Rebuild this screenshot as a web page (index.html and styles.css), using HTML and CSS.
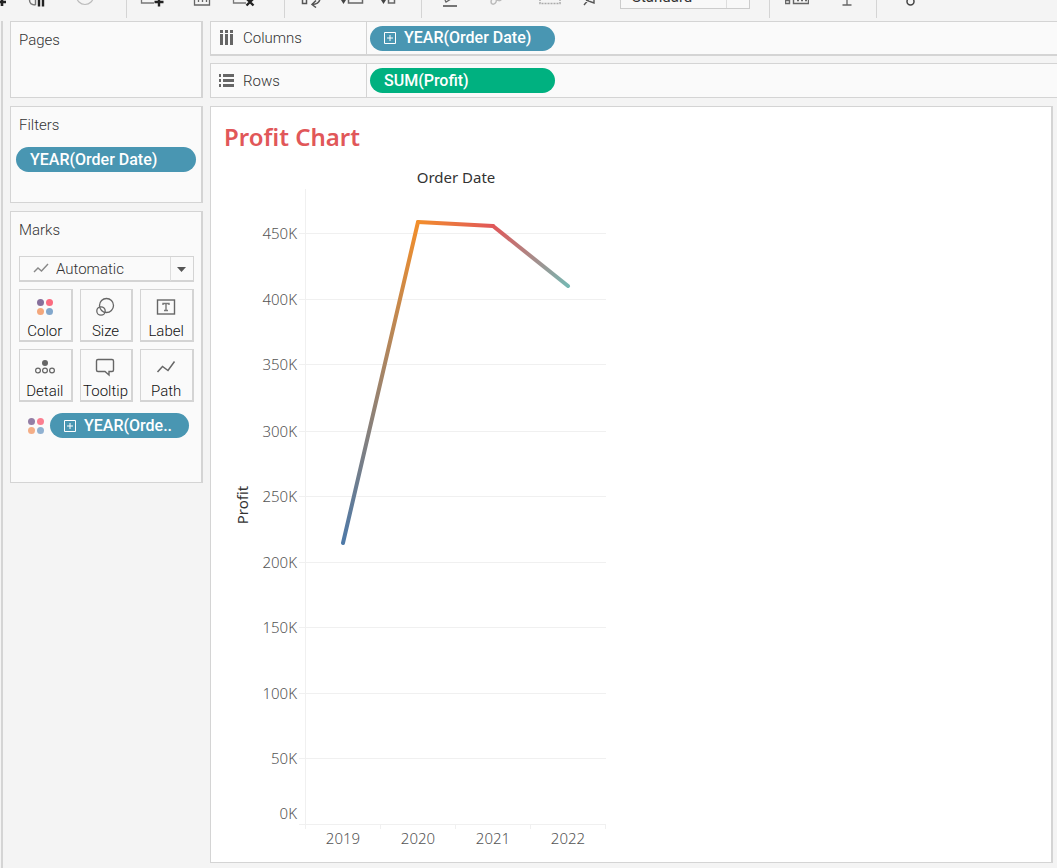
FILE: index.html
```
<!DOCTYPE html>
<html lang="en">
<head>
<meta charset="utf-8">
<title>Profit Chart</title>
<link rel="stylesheet" href="styles.css">
</head>
<body>
<div class="app">
  <header class="toolbar">
    <div class="group group-nav">
      <button class="tool" aria-label="New data source"><svg viewBox="0 0 24 24"><path d="M12 18h9M17 14v8" stroke="#222" stroke-width="2.6"/></svg></button>
      <button class="tool" aria-label="Pause updates"><svg viewBox="0 0 24 24"><path d="M4.500 16q0 5 6 5M10.500 16v5" stroke="#777" stroke-width="1.4"/><path d="M14 14v8.500M18 14v8.500" stroke="#222" stroke-width="2.400"/></svg></button>
      <button class="tool" aria-label="Refresh"><svg viewBox="0 0 24 24"><circle cx="12" cy="12" r="8.500" stroke="#bbb" stroke-width="1.200"/></svg></button>
    </div>
    <div class="group group-sheet">
      <button class="tool" aria-label="New worksheet"><svg viewBox="0 0 24 24"><path d="M1.500 12v7H14" stroke="#777" stroke-width="1.300"/><path d="M14.500 18h9M19 13.500v9" stroke="#222" stroke-width="2.400"/></svg></button>
      <button class="tool" aria-label="Duplicate"><svg viewBox="0 0 24 24"><path d="M4.500 12v9h15v-9M8.500 12v6M12.500 12v6M16.500 12v6" stroke="#666" stroke-width="1.300"/></svg></button>
      <button class="tool" aria-label="Clear sheet"><svg viewBox="0 0 24 24"><path d="M1.500 12v7H14" stroke="#777" stroke-width="1.300"/><path d="m14.500 14.500 7 7m0-7-7 7" stroke="#222" stroke-width="2.400"/></svg></button>
    </div>
    <div class="group group-sort">
      <button class="tool" aria-label="Swap"><svg viewBox="0 0 24 24"><path d="M2.500 12v7.500h4V12M20 14q0 6-8 6.500m4-4-4 4 4 3" stroke="#555" stroke-width="1.500"/></svg></button>
      <button class="tool" aria-label="Sort ascending"><svg viewBox="0 0 24 24"><path d="M1 16h5l-2.500 4z" fill="#444"/><path d="M8.500 12v7h14v-7" stroke="#666" stroke-width="1.500"/></svg></button>
      <button class="tool" aria-label="Sort descending"><svg viewBox="0 0 24 24"><path d="M1 16h5l-2.500 4z" fill="#444"/><path d="M8.500 12v7h6v-7" stroke="#666" stroke-width="1.500"/></svg></button>
    </div>
    <div class="group group-format">
      <button class="tool" aria-label="Highlight"><svg viewBox="0 0 24 24"><path d="M6 16l1 2 10-6" stroke="#666" stroke-width="1.300"/><path d="M4 22h14" stroke="#555" stroke-width="1.600"/></svg></button>
      <button class="tool" aria-label="Group members"><svg viewBox="0 0 24 24"><path d="M3 15c-3 5 2 7 4 3l1-4m0 0c1 4 4 3 5 0" stroke="#bbb" stroke-width="1.500"/></svg></button>
      <button class="tool" aria-label="Show labels"><svg viewBox="0 0 24 24"><path d="M1 15v4.500h20V15" stroke="#aaa" stroke-width="1.500" stroke-dasharray="2 1"/></svg></button>
      <button class="tool" aria-label="Fix axes"><svg viewBox="0 0 24 24"><path d="m7 21 6-7m-4 2 8 3v-5" stroke="#555" stroke-width="1.400"/></svg></button>
      <select class="fit" aria-label="Fit"><option>Standard</option></select>
    </div>
    <div class="group group-view">
      <button class="tool" aria-label="Show cards"><svg viewBox="0 0 24 24"><path d="M.500 12v7.500h4V12M0 16.500h5M8.500 12v7.500h15V12M12 16.500h2m2 0h2m2 0h2" stroke="#666" stroke-width="1.400"/></svg></button>
      <button class="tool" aria-label="Presentation mode"><svg viewBox="0 0 24 24"><path d="M12 12v9M7.500 21h9" stroke="#666" stroke-width="1.300"/></svg></button>
    </div>
    <div class="group group-share">
      <button class="tool" aria-label="Share"><svg viewBox="0 0 24 24"><circle cx="11.500" cy="17.500" r="3.500" stroke="#444" stroke-width="1.500"/></svg></button>
    </div>
  </header>

  <div class="workspace">
    <div class="rail"></div>
    <aside class="sidebar">
      <section class="card pages"><h2 class="card-title">Pages</h2></section>
      <section class="card filters">
        <h2 class="card-title">Filters</h2>
        <button class="pill">YEAR(Order Date)</button>
      </section>
      <section class="card marks">
        <h2 class="card-title">Marks</h2>
        <div class="mark-type">
          <svg class="mark-icon" viewBox="0 0 16 12"><path d="m1 9 4-4 3.500 3L15 1" stroke="#888" stroke-width="1.400"/></svg>
          <select class="mark-select" aria-label="Mark type"><option>Automatic</option></select>
          <svg class="mark-arrow" viewBox="0 0 23 24"><path d="M.5 0v24" stroke="#ddd"/><path d="M7 10h9l-4.500 5z" fill="#555"/></svg>
        </div>
        <div class="mark-grid">
          <button class="mark"><svg viewBox="0 0 24 24"><circle cx="7.500" cy="7.500" r="3.500" fill="#866f9b"/><circle cx="16.500" cy="7.500" r="3.500" fill="#fb6b80"/><circle cx="7.500" cy="16.500" r="3.500" fill="#f3a77c"/><circle cx="16.500" cy="16.500" r="3.500" fill="#82a7cc"/></svg>Color</button>
          <button class="mark"><svg viewBox="0 0 24 24"><circle cx="13.500" cy="10.500" r="7" stroke="#666" stroke-width="1.300"/><circle cx="8" cy="16" r="4.200" stroke="#666" stroke-width="1.300"/></svg>Size</button>
          <button class="mark"><svg viewBox="0 0 24 24"><rect x="3.500" y="5" width="17" height="14" stroke="#666" stroke-width="1.400"/><path d="M9 10V8.500h6V10M12 8.500v7M10 15.500h4" stroke="#777" stroke-width="1.400"/></svg>Label</button>
          <button class="mark"><svg viewBox="0 0 24 24"><circle cx="12" cy="8" r="3" fill="#666"/><circle cx="5" cy="15.500" r="2.400" stroke="#666" stroke-width="1.200"/><circle cx="12" cy="15.500" r="2.400" stroke="#666" stroke-width="1.200"/><circle cx="19" cy="15.500" r="2.400" stroke="#666" stroke-width="1.200"/></svg>Detail</button>
          <button class="mark"><svg viewBox="0 0 24 24"><path d="M5 4.500h14q1.500 0 1.500 1.500v9q0 1.500-1.500 1.500h-3V20l-4-3.500H5q-1.500 0-1.500-1.500V6q0-1.500 1.500-1.500z" stroke="#666" stroke-width="1.400"/></svg>Tooltip</button>
          <button class="mark"><svg viewBox="0 0 24 24"><path d="m3.500 17 5-5.500 5.500 4 6.500-9" stroke="#666" stroke-width="1.500"/></svg>Path</button>
        </div>
        <div class="mark-field">
          <svg class="dots" viewBox="0 0 16 16"><circle cx="3.500" cy="3.500" r="3.500" fill="#937ea5"/><circle cx="12.500" cy="3.500" r="3.500" fill="#fb7e90"/><circle cx="3.500" cy="12.500" r="3.500" fill="#f4ae87"/><circle cx="12.500" cy="12.500" r="3.500" fill="#90b1d1"/></svg>
          <button class="pill"><svg class="expand" viewBox="0 0 12 12"><path d="M.5.5h11v11H.5zM3 6h6M6 3v6" stroke="#fff"/></svg>YEAR(Orde..</button>
        </div>
      </section>
    </aside>

    <main class="main">
      <div class="shelf shelf-columns">
        <div class="shelf-name"><svg class="shelf-icon" viewBox="0 0 16 16"><path d="M2.500 0v3M7.500 0v3M12.500 0v3M2.500 4v11M7.500 4v11M12.500 4v11" stroke="#666" stroke-width="3"/></svg>Columns</div>
        <button class="pill shelf-pill"><svg class="expand" viewBox="0 0 12 12"><path d="M.5.5h11v11H.5zM3 6h6M6 3v6" stroke="#fff"/></svg>YEAR(Order Date)</button>
      </div>
      <div class="shelf">
        <div class="shelf-name"><svg class="shelf-icon" viewBox="0 0 16 16"><path d="M0 2.500h2M0 7.500h2M0 12.500h2M4 2.500h11M4 7.500h11M4 12.500h11" stroke="#666" stroke-width="3"/></svg>Rows</div>
        <button class="pill pill-green shelf-pill">SUM(Profit)</button>
      </div>
      <section class="sheet">
        <h1 class="sheet-title">Profit Chart</h1>
        <svg class="chart" viewBox="0 0 384 690" role="img" aria-label="Profit by order date">
          <defs>
            <linearGradient id="rise" gradientUnits="userSpaceOnUse" x1="119" y1="378" x2="194" y2="57"><stop offset="0" stop-color="#4e79a7"/><stop offset="1" stop-color="#f28e2b"/></linearGradient>
            <linearGradient id="flat" gradientUnits="userSpaceOnUse" x1="194" y1="57" x2="269" y2="61"><stop offset="0" stop-color="#f28e2b"/><stop offset="1" stop-color="#e15759"/></linearGradient>
            <linearGradient id="fall" gradientUnits="userSpaceOnUse" x1="269" y1="61" x2="344" y2="121"><stop offset="0" stop-color="#e15759"/><stop offset="1" stop-color="#76b7b2"/></linearGradient>
          </defs>
          <path class="grid" d="M75 68.500H382M75 134.500H382M75 199.500H382M75 266.500H382M75 331.500H382M75 397.500H382M75 462.500H382M75 528.500H382M75 593.500H382M75 659.500H382M81.500 24V664M156.500 660v4M231.500 660v4M306.500 660v4M381.500 660v4"/>
          <g class="line">
            <path d="M119 378 194 57" stroke="url(#rise)"/>
            <path d="m194 57 75 4" stroke="url(#flat)"/>
            <path d="m269 61 75 60" stroke="url(#fall)"/>
          </g>
          <text class="field" x="232" y="18">Order Date</text>
          <text class="field" transform="translate(24 340) rotate(-90)">Profit</text>
          <g class="tick-y">
            <text x="73" y="74">450K</text><text x="73" y="140">400K</text><text x="73" y="205">350K</text><text x="73" y="272">300K</text><text x="73" y="337">250K</text><text x="73" y="403">200K</text><text x="73" y="468">150K</text><text x="73" y="534">100K</text><text x="73" y="599">50K</text><text x="73" y="654">0K</text>
          </g>
          <g class="tick-x">
            <text x="119" y="679">2019</text><text x="194" y="679">2020</text><text x="269" y="679">2021</text><text x="344" y="679">2022</text>
          </g>
        </svg>
      </section>
    </main>
  </div>
</div>
</body>
</html>
```
FILE: styles.css
```
* { box-sizing: border-box; }
body { margin: 0; background: #f4f4f4; color: #333; font: 300 15px/20px Roboto, "Open Sans", sans-serif; }
button, select { font: inherit; color: inherit; margin: 0; padding: 0; border: 0; background: none; }
svg { display: block; fill: none; flex: none; }
h1, h2 { margin: 0; }

.app { display: flex; flex-direction: column; min-height: 100vh; }

/* Toolbar */
.toolbar { display: flex; align-items: flex-end; height: 21px; overflow: hidden; padding-bottom: 3px; }
.group { display: flex; align-items: flex-end; flex: none; height: 32px; padding-bottom: 10px; border-right: 1px solid #d4d4d4; }
.group:last-child { border-right: 0; }
.tool { width: 24px; height: 24px; flex: none; }
.tool svg { width: 24px; height: 24px; }
.group-nav { width: 127px; gap: 24px; }
.group-nav .tool:first-child { margin-left: -15px; }
.group-nav .tool:nth-child(2) { margin-left: -8px; }
.group-sheet { width: 158px; padding-left: 13px; gap: 26px; }
.group-sheet .tool:last-child { margin-left: -8px; }
.group-sort { width: 137px; padding-left: 15px; gap: 16px; }
.group-format { width: 348px; padding-left: 17px; gap: 26px; }
.group-format .tool:nth-child(4) { margin-left: -12px; }
.group-view { width: 107px; padding-left: 15px; gap: 26px; }
.group-share { padding-left: 22px; }
.fit { appearance: none; width: 130px; height: 24px; margin-left: -7px; margin-bottom: -1px; padding-left: 11px; border: 1px solid #ccc; background: linear-gradient(#ddd, #ddd) 105px 0 / 1px 100% no-repeat #f8f8f8; color: #333; font-weight: 400; line-height: 14px; }

/* Workspace */
.workspace { display: flex; flex: 1; }
.rail { width: 3px; flex: none; border-right: 2px solid #d4d4d4; }
.sidebar { display: flex; flex-direction: column; gap: 8px; width: 200px; flex: none; padding-left: 7px; }
.card { border: 1px solid #d4d4d4; border-right-width: 2px; background: #fafafa; }
.card-title { padding: 8px 8px 0; font-size: 15px; font-weight: 300; line-height: 20px; }
.pages { height: 77px; }
.filters { height: 97px; }
.filters .pill { width: 180px; margin: 12px 0 0 5px; }
.marks { min-height: 272px; }

.pill { display: flex; align-items: center; gap: 8px; height: 25px; padding: 0 14px; border-radius: 13px; background: #4996b2; color: #fff; font: 500 16px/24px Roboto, sans-serif; text-align: left; white-space: nowrap; }
.pill-green { background: #00b180; }
.expand { width: 12px; height: 12px; }

.mark-type { display: flex; align-items: center; height: 26px; margin: 16px 7px 0 8px; padding-left: 13px; border: 1px solid #d4d4d4; border-bottom-width: 2px; }
.mark-icon { width: 16px; height: 12px; }
.mark-select { appearance: none; flex: 1; min-width: 0; height: 24px; padding-left: 7px; }
.mark-arrow { width: 23px; height: 24px; }
.mark-grid { display: grid; grid-template-columns: repeat(3, 1fr); gap: 7px; margin: 7px 7px 0 8px; }
.mark { display: flex; flex-direction: column; align-items: center; gap: 2px; height: 53px; padding: 5px 1px 0 0; border: 1px solid #d4d4d4; border-width: 1px 2px 2px 1px; background: #fafafa; color: #111; line-height: 20px; }
.mark svg { width: 24px; height: 24px; }
.mark-field { display: flex; align-items: center; gap: 6px; margin: 11px 12px 0 17px; }
.mark-field .pill { flex: 1; }
.dots { width: 16px; height: 16px; }

.main { display: flex; flex-direction: column; flex: 1; gap: 8px; min-width: 0; padding: 0 0 5px 7px; }
.shelf { display: flex; height: 35px; border: 1px solid #d4d4d4; border-right: 0; background: #fafafa; }
.shelf-columns { margin-bottom: -1px; border-bottom-width: 2px; }
.shelf-name { display: flex; align-items: center; gap: 8px; width: 156px; padding-left: 8px; border-right: 1px solid #d4d4d4; }
.shelf-icon { width: 16px; height: 16px; }
.shelf-pill { align-self: center; width: 185px; margin-left: 3px; }

/* Sheet */
.sheet { flex: 1; margin-right: 4px; padding: 14px 13px 0; border: 1px solid #d4d4d4; border-right-width: 2px; background: #fff; }
.sheet-title { color: #e15759; font: 600 24px/32px "Noto Sans", sans-serif; }
.chart { width: 384px; max-width: 100%; height: auto; margin-top: 12px; }
.chart text { font: 300 15px "Noto Sans", sans-serif; fill: #555; }
.chart .field { font-weight: 400; fill: #333; text-anchor: middle; }
.grid { stroke: #f0f0f0; }
.line { stroke-width: 4; stroke-linecap: round; }
.tick-y { text-anchor: end; }
.tick-x { text-anchor: middle; }
```
